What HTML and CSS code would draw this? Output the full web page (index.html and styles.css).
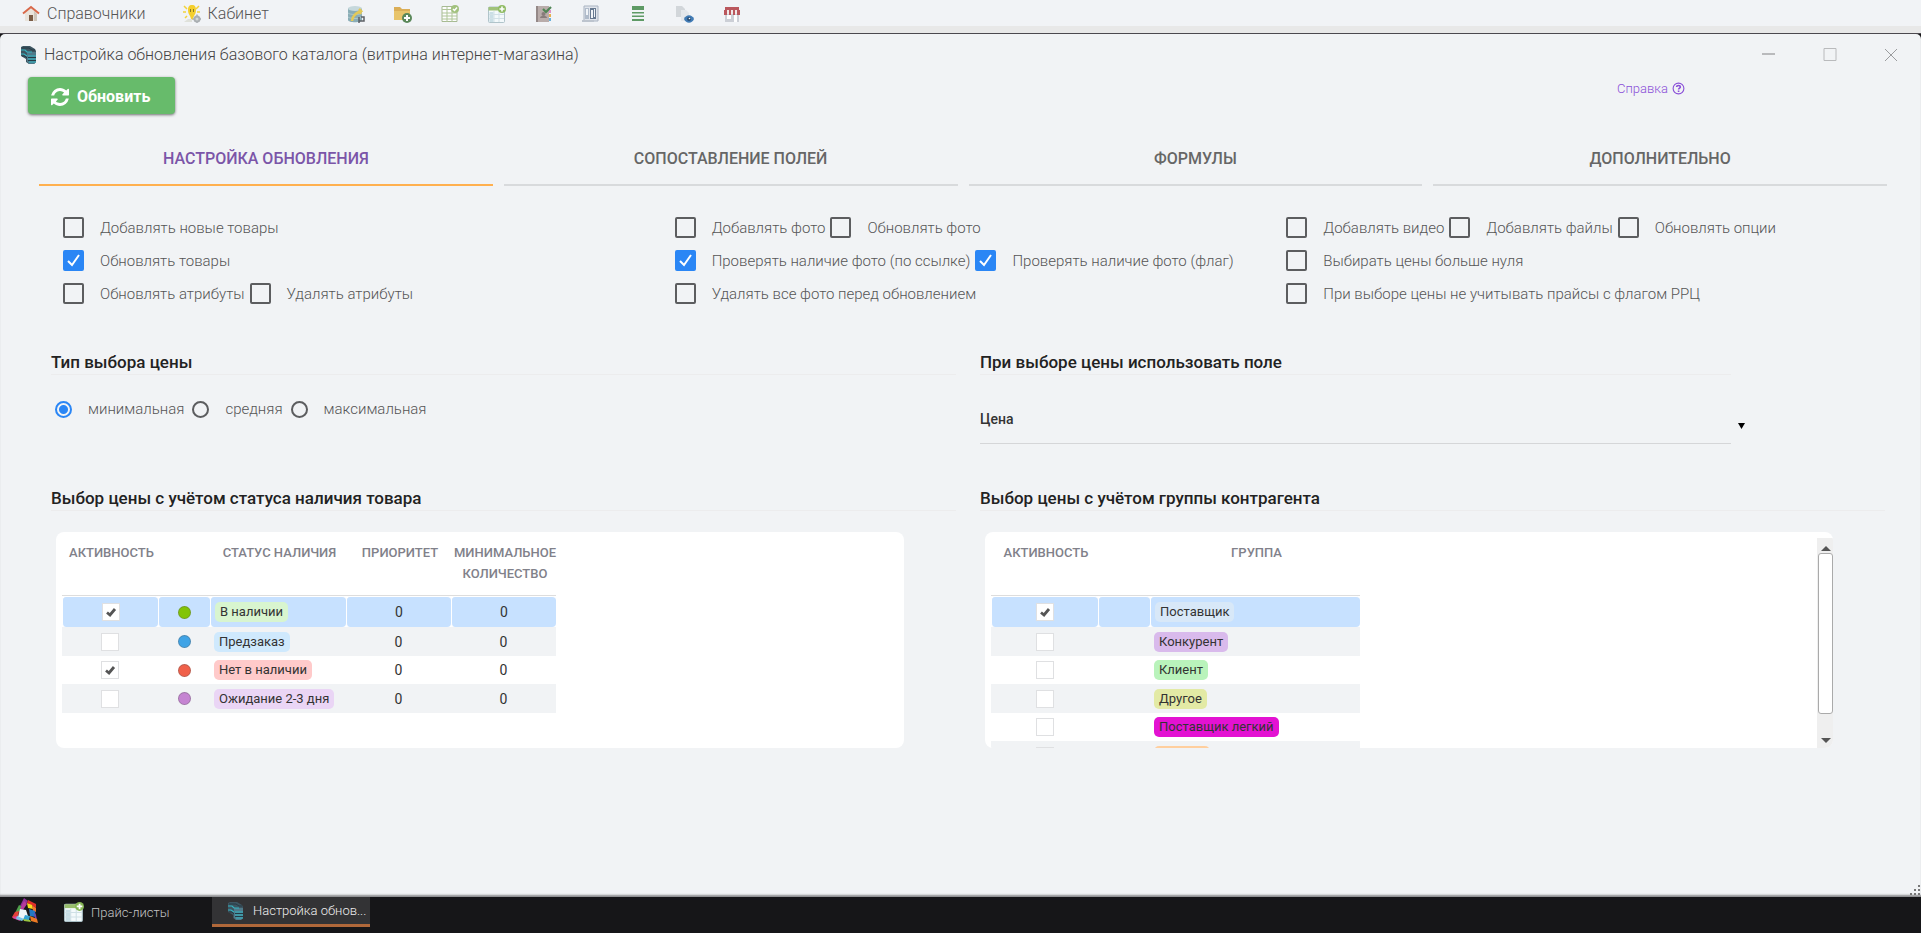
FILE: index.html
```html
<!DOCTYPE html>
<html lang="ru">
<head>
<meta charset="utf-8">
<title>Настройка обновления базового каталога</title>
<link rel="stylesheet" href="styles.css">
</head>
<body>
<svg class="sprite" aria-hidden="true">
  <symbol id="i-catalog" viewBox="0 0 18 20">
    <path fill="#3d5561" d="M1 2l2-1h7l5 3 1 2v11l-2 2H9l-3-2v-3l-5-3z"/>
    <path fill="#4f7a8a" d="M7 7h9v10l-2 2H9l-2-2z"/>
    <path stroke="#35b4c2" stroke-width="1.200" fill="none" d="M1 5h4l2 2h5M1 9h3l3 2M8 11h8M8 14h8M9 17h7"/>
    <path stroke="#263a44" stroke-width="1" fill="none" d="M2 3h7l3 2h3M2 11h3l2 2M8 12.500h8M8 15.500h8"/>
  </symbol>
  <symbol id="i-sheet-plus" viewBox="0 0 18 18">
    <rect x=".5" y="2" width="16" height="15.500" rx="1" fill="#f4fafc" stroke="#a9bfc6"/>
    <path fill="#98bd6c" d="M.5 2h16v3.500H.5z"/>
    <path fill="#c6dde5" d="M1.500 7h4v10h-4z"/>
    <path stroke="#cfe0e6" fill="none" d="M1 9.500h15M1 13.500h15M6 6v11M11 6v11"/>
    <circle cx="14" cy="4" r="4" fill="#86b655"/>
    <path stroke="#fff" stroke-width="1.600" d="M14 1.500v5M11.500 4h5"/>
  </symbol>
</svg>

<header class="topbar">
  <nav class="menu">
    <a class="menu-item" href="#">
      <svg class="icon" viewBox="0 0 18 18"><path fill="#e9e4dc" d="M3 8l6-5 6 5v8H3z"/><path fill="#cfc7bb" d="M12 6l3 3v7h-3z"/><path fill="#7a5c45" d="M7 10h4v6H7z"/><path fill="none" stroke="#d9694a" stroke-width="2" d="M1 8.500L9 2l8 6.500"/></svg>
      Справочники</a>
    <a class="menu-item" href="#">
      <svg class="icon" viewBox="0 0 18 18"><path stroke="#f2d33c" stroke-width="1.500" d="M1 1l3 3M16 1l-3 3M0 7h3M17 7h-3M2 13l2-2"/><path fill="#f4cf2d" d="M9 0c3 0 4 2 4 5s-1 4-2 6-1 4-2 4-1-2-2-4-2-3-2-6 1-5 4-5z"/><path stroke="#8b7a24" d="M7.500 4v3M10.500 4v3"/><path fill="#dfe1da" d="M1 17l4-3h4v3z"/><circle cx="14" cy="14" r="2.500" fill="#d5d8da" stroke="#aaafb2" stroke-width="2"/><path stroke="#aaafb2" stroke-width="1.500" d="M14 9.500v2M14 17v1M9.500 14h2M17 14h1"/></svg>
      Кабинет</a>
  </nav>
  <div class="tools">
    <button class="tool" type="button" aria-label="База данных"><svg class="icon" viewBox="0 0 18 18"><path fill="#7fa6b0" d="M1 3v12c0 3 14 3 14 0V3z"/><ellipse cx="8" cy="3.500" rx="7" ry="2.500" fill="#c2d6da"/><path stroke="#a8c4ca" fill="none" d="M1 8c2 2 12 2 14 0M1 12c2 2 12 2 14 0"/><path stroke="#e2c548" stroke-width="2.500" fill="none" d="M5 16c0-5 4-8 9-10l-2-2M14 6l-1 3"/><path stroke="#4d5257" stroke-width="1.500" fill="none" d="M12 12v6M12 16h5v-4h-3"/></svg></button>
    <button class="tool" type="button" aria-label="Добавить папку"><svg class="icon" viewBox="0 0 18 18"><path fill="#d9a746" d="M0 2h6l2 2h8v11H0z"/><path fill="#e8bf5c" d="M0 6h16v9H0z"/><circle cx="13" cy="13" r="5" fill="#4b7d4a"/><path stroke="#fff" stroke-width="2" d="M13 10v6M10 13h6"/></svg></button>
    <button class="tool" type="button" aria-label="Проверить лист"><svg class="icon" viewBox="0 0 18 18"><path fill="#fff" stroke="#9fb489" d="M1 1.500h15v15H1z"/><path stroke="#a9c18e" fill="none" d="M1 4.500h15M1 8h15M1 11h15M1 14h15M6 2v15M11 2v15"/><circle cx="14" cy="4" r="4" fill="#9abd72"/><path stroke="#fff" stroke-width="1.500" fill="none" d="M12 4l1.500 1.500L16 2.500"/></svg></button>
    <button class="tool" type="button" aria-label="Добавить лист"><svg class="icon"><use href="#i-sheet-plus"/></svg></button>
    <button class="tool" type="button" aria-label="Справочник"><svg class="icon" viewBox="0 0 18 18"><path fill="#b3a5a2" d="M1 1h13v16H1z"/><path fill="#8b7d7b" d="M1 1h2v16H1z"/><circle cx="8.500" cy="9" r="2" fill="#7d706e"/><path fill="#7d706e" d="M5 13c0-3 7-3 7 0z"/><path fill="#d987c0" d="M14 5h2v3h-2z"/><path fill="#e8a93b" d="M14 9h2v3h-2z"/><path fill="#5aa9d6" d="M14 13h2v3h-2z"/><path stroke="#3f7a45" stroke-width="2.200" fill="none" d="M8 4l3 3 5-5"/></svg></button>
    <button class="tool" type="button" aria-label="Архив"><svg class="icon" viewBox="0 0 18 18"><path fill="#dfe3ea" stroke="#a3adbd" d="M2 1h14v15H2z"/><path fill="#a9b5c6" d="M3 3h4v11H3z"/><path fill="#5a6c86" d="M8 3h6v11H8z"/><path fill="#f2f5f9" d="M4 4h2v6H4zM9 5h2v8H9zM12 4h1v8h-1z"/><path fill="#b8bfca" d="M0 15h12v2H0z"/></svg></button>
    <button class="tool" type="button" aria-label="Список"><svg class="icon" viewBox="0 0 18 18"><path fill="#4f9156" d="M3 1h12v4H3zM3 7h12v1.500H3zM3 10.500h12V12H3zM3 14h12v2H3z"/></svg></button>
    <button class="tool" type="button" aria-label="Просмотр"><svg class="icon" viewBox="0 0 18 18"><path fill="#cfd3d8" d="M0 1h6l3 3v8H0z"/><path fill="#e3e6ea" d="M5 5h5l3 3v8H5z"/><path fill="#2f6fae" d="M8 14c2-5 8-5 10 0-2 5-8 5-10 0z"/><circle cx="13" cy="14" r="2" fill="#153d68"/><circle cx="13.500" cy="13.500" r=".8" fill="#fff"/></svg></button>
    <button class="tool" type="button" aria-label="Магазин"><svg class="icon" viewBox="0 0 18 18"><path fill="#c9ccd3" d="M2 8h14v9H2z"/><path fill="#fff" d="M4 10h4v4H4zM11 10h3v7h-3z"/><path fill="#b5474d" d="M2 2h14v3H2zM1 5h3v5H1zM6 5h2v5H6zM10 5h2v5h-2zM14 5h3v5h-3z"/><path fill="#f2e6e6" d="M4 5h2v4H4zM8 5h2v4H8zM12 5h2v4h-2z"/></svg></button>
  </div>
</header>

<main class="window">
  <div class="titlebar">
    <svg class="title-icon"><use href="#i-catalog"/></svg>
    <h1 class="title">Настройка обновления базового каталога (витрина интернет-магазина)</h1>
    <div class="window-controls">
      <button class="wc" type="button" aria-label="Свернуть"><svg viewBox="0 0 14 14"><path d="M0 6h13" stroke-width="2"/></svg></button>
      <button class="wc" type="button" aria-label="Развернуть"><svg viewBox="0 0 14 14"><path d="M1 .5h12v12H1z"/></svg></button>
      <button class="wc" type="button" aria-label="Закрыть"><svg viewBox="0 0 14 14"><path d="M1 1l12 12M13 1L1 13" stroke="#9b9c9e"/></svg></button>
    </div>
  </div>

  <div class="actions">
    <button class="update" type="button">
      <svg class="update-icon" viewBox="0 0 1536 1536"><path fill="currentColor" d="M1511 928q0 5-1 7-64 268-268 434.500T764 1536q-146 0-282.500-55T238 1324l-129 129q-19 19-45 19t-45-19-19-45V960q0-26 19-45t45-19h448q26 0 45 19t19 45-19 45l-137 137q71 66 161 102t187 36q134 0 250-65t186-179q11-17 53-117 8-23 30-23h192q13 0 22.500 9.500t9.500 22.500zm25-800v448q0 26-19 45t-45 19h-448q-26 0-45-19t-19-45 19-45l138-138Q969 256 768 256q-134 0-250 65T332 500q-11 17-53 117-8 23-30 23H50q-13 0-22.500-9.500T18 608v-7q65-268 270-434.500T768 0q146 0 284 55.500T1297 212l130-129q19-19 45-19t45 19 19 45z"/></svg>
      Обновить</button>
    <a class="help" href="#">Справка
      <svg class="help-icon" viewBox="0 0 14 14"><circle cx="7" cy="7" r="5.800" fill="none" stroke="currentColor" stroke-width="1.200"/><path fill="none" stroke="currentColor" stroke-width="1.700" d="M4.900 5.400c.2-2.300 4.100-2.100 4.100-.1 0 1.400-1.900 1.300-1.900 2.900M7.100 9.200v1.700"/></svg></a>
  </div>

  <nav class="tabs">
    <a class="tab tab-active" href="#">НАСТРОЙКА ОБНОВЛЕНИЯ</a>
    <a class="tab" href="#">СОПОСТАВЛЕНИЕ ПОЛЕЙ</a>
    <a class="tab" href="#">ФОРМУЛЫ</a>
    <a class="tab" href="#">ДОПОЛНИТЕЛЬНО</a>
  </nav>

  <div class="options">
    <div class="option-col">
      <div class="option-row"><label class="option"><input class="check" type="checkbox">Добавлять новые товары</label></div>
      <div class="option-row"><label class="option"><input class="check" type="checkbox" checked>Обновлять товары</label></div>
      <div class="option-row"><label class="option"><input class="check" type="checkbox">Обновлять атрибуты</label><label class="option"><input class="check" type="checkbox">Удалять атрибуты</label></div>
    </div>
    <div class="option-col">
      <div class="option-row"><label class="option"><input class="check" type="checkbox">Добавлять фото</label><label class="option"><input class="check" type="checkbox">Обновлять фото</label></div>
      <div class="option-row"><label class="option"><input class="check" type="checkbox" checked>Проверять наличие фото (по ссылке)</label><label class="option"><input class="check" type="checkbox" checked>Проверять наличие фото (флаг)</label></div>
      <div class="option-row"><label class="option"><input class="check" type="checkbox">Удалять все фото перед обновлением</label></div>
    </div>
    <div class="option-col">
      <div class="option-row"><label class="option"><input class="check" type="checkbox">Добавлять видео</label><label class="option"><input class="check" type="checkbox">Добавлять файлы</label><label class="option"><input class="check" type="checkbox">Обновлять опции</label></div>
      <div class="option-row"><label class="option"><input class="check" type="checkbox">Выбирать цены больше нуля</label></div>
      <div class="option-row"><label class="option"><input class="check" type="checkbox">При выборе цены не учитывать прайсы с флагом РРЦ</label></div>
    </div>
  </div>

  <div class="sections">
    <section class="section">
      <h2 class="heading">Тип выбора цены</h2>
      <div class="radios">
        <label class="option"><input class="radio" type="radio" name="price" checked>минимальная</label>
        <label class="option"><input class="radio" type="radio" name="price">средняя</label>
        <label class="option"><input class="radio" type="radio" name="price">максимальная</label>
      </div>
    </section>
    <section class="section section-field">
      <h2 class="heading" id="field-title">При выборе цены использовать поле</h2>
      <div class="select-wrap">
        <select class="select" aria-labelledby="field-title"><option>Цена</option></select>
        <svg class="select-arrow" viewBox="0 0 8 6"><path d="M0 0h7L3.500 6z"/></svg>
      </div>
    </section>

    <section class="section">
      <h2 class="heading">Выбор цены с учётом статуса наличия товара</h2>
      <div class="card">
        <table class="grid grid-status">
          <colgroup><col class="c-active"><col class="c-dot"><col class="c-name"><col class="c-num"><col class="c-num"></colgroup>
          <thead><tr><th>АКТИВНОСТЬ</th><th></th><th>СТАТУС НАЛИЧИЯ</th><th>ПРИОРИТЕТ</th><th>МИНИМАЛЬНОЕ КОЛИЧЕСТВО</th></tr></thead>
          <tbody>
            <tr class="selected"><td><input class="tick" type="checkbox" checked aria-label="В наличии"></td><td><span class="dot dot-green"></span></td><td class="name"><span class="tag tag-green">В наличии</span></td><td>0</td><td>0</td></tr>
            <tr><td><input class="tick" type="checkbox" aria-label="Предзаказ"></td><td><span class="dot dot-blue"></span></td><td class="name"><span class="tag tag-sky">Предзаказ</span></td><td>0</td><td>0</td></tr>
            <tr><td><input class="tick" type="checkbox" checked aria-label="Нет в наличии"></td><td><span class="dot dot-red"></span></td><td class="name"><span class="tag tag-red">Нет в наличии</span></td><td>0</td><td>0</td></tr>
            <tr><td><input class="tick" type="checkbox" aria-label="Ожидание 2-3 дня"></td><td><span class="dot dot-violet"></span></td><td class="name"><span class="tag tag-violet">Ожидание 2-3 дня</span></td><td>0</td><td>0</td></tr>
          </tbody>
        </table>
      </div>
    </section>
    <section class="section">
      <h2 class="heading">Выбор цены с учётом группы контрагента</h2>
      <div class="card card-scroll">
        <table class="grid grid-group">
          <colgroup><col class="c-wide"><col class="c-dot"><col class="c-group"></colgroup>
          <thead><tr><th>АКТИВНОСТЬ</th><th></th><th>ГРУППА</th></tr></thead>
          <tbody>
            <tr class="selected"><td><input class="tick" type="checkbox" checked aria-label="Поставщик"></td><td></td><td class="name"><span class="tag tag-pale">Поставщик</span></td></tr>
            <tr><td><input class="tick" type="checkbox" aria-label="Конкурент"></td><td></td><td class="name"><span class="tag tag-lilac">Конкурент</span></td></tr>
            <tr><td><input class="tick" type="checkbox" aria-label="Клиент"></td><td></td><td class="name"><span class="tag tag-mint">Клиент</span></td></tr>
            <tr><td><input class="tick" type="checkbox" aria-label="Другое"></td><td></td><td class="name"><span class="tag tag-olive">Другое</span></td></tr>
            <tr><td><input class="tick" type="checkbox" aria-label="Поставщик легкий"></td><td></td><td class="name"><span class="tag tag-magenta">Поставщик легкий</span></td></tr>
            <tr><td><input class="tick" type="checkbox" aria-label="Прочий"></td><td></td><td class="name"><span class="tag tag-orange">Прочий</span></td></tr>
          </tbody>
        </table>
        <div class="scrollbar" aria-hidden="true">
          <svg class="scroll-arrow" viewBox="0 0 10 6"><path d="M5 0l5 5H0z"/></svg>
          <div class="scroll-thumb"></div>
          <svg class="scroll-arrow scroll-down" viewBox="0 0 10 6"><path d="M5 5l5-5H0z"/></svg>
        </div>
      </div>
    </section>
  </div>
  <svg class="grip" viewBox="0 0 12 12"><path fill="#777" d="M9 1h2v2H9zM9 5h2v2H9zM5 5h2v2H5zM9 9h2v2H9zM5 9h2v2H5zM1 9h2v2H1z"/></svg>
</main>

<footer class="taskbar">
  <button class="start" type="button" aria-label="Пуск">
    <svg class="start-icon" viewBox="0 0 26 26"><path fill="#8e2f96" d="M12 0l4 3-4 6-5 1z"/><path fill="#4fa04a" d="M7 7l4 2-3 5-5 1z"/><path fill="#b53a9c" d="M12 3l3 3-4 6-3-1z"/><path fill="#f5dd1f" d="M15 5l5 1 1 5-5-1z"/><path fill="#e0302b" d="M16 2l8 4v4l-4-3-5-2z"/><path fill="#f0762a" d="M20 7l4 3v4l-3-1z"/><path fill="#2479c4" d="M17 11l6 2 1 6-6-1z"/><path fill="#7b3fae" d="M22 14l2 3 1 5-2-1z"/><path fill="#ee7a24" d="M18 18l7 3 1 4-7-2z"/><path fill="#e5413a" d="M3 14l4-1-1 5-4 3-2-2z"/><path fill="#d8459d" d="M0 19l6-1 2 5-5-2z"/><path fill="#eef5f8" d="M8 11l6 1 2 6-5 4-5-3z"/><path fill="#79c4e8" d="M5 18l7 3-2 2-6-2z"/><path fill="#35a4d4" d="M13 17l5 1-1 4-6 0z"/><path fill="#9bc540" d="M11 21l7 1 1 2-7-1z"/></svg>
  </button>
  <button class="task" type="button"><svg class="task-icon"><use href="#i-sheet-plus"/></svg><span class="task-text">Прайс-листы</span></button>
  <button class="task task-active" type="button"><svg class="task-icon"><use href="#i-catalog"/></svg><span class="task-text">Настройка обнов...</span></button>
</footer>
</body>
</html>
```
FILE: styles.css
```css
* { box-sizing: border-box; }
body {
  margin: 0;
  min-height: 100vh;
  display: flex;
  flex-direction: column;
  background: #161618;
  color: #444;
  font-family: Roboto, "Liberation Sans", sans-serif;
  font-size: 16px;
  font-weight: 300;
}
button { padding: 0; border: 0; background: none; font: inherit; color: inherit; }
a { color: inherit; text-decoration: none; }
svg { display: block; flex: none; }
.sprite { position: absolute; width: 0; height: 0; }

.topbar {
  height: 34px;
  display: flex;
  align-items: flex-start;
  background: #f1f3f6;
  border-bottom: 1px solid #4b484e;
  box-shadow: inset 0 -7px #e8e8e8;
}
.menu { display: flex; gap: 37px; width: 347px; padding-left: 22px; }
.menu-item { display: flex; align-items: center; gap: 7px; height: 27px; color: #555; }
.icon { width: 18px; height: 18px; }
.tools { display: flex; align-items: center; gap: 29px; height: 28px; opacity: .9; }

.window {
  position: relative;
  flex: 1;
  padding-bottom: 24px;
  background: #f1f3f5;
  border-radius: 5px 5px 0 0;
  box-shadow: inset 0 -3px 2px -1px #8c8d8f;
}
.titlebar { display: flex; align-items: center; gap: 6px; height: 40px; padding: 1px 23px 0 20px; }
.title-icon { width: 18px; height: 20px; }
.title { flex: 1; margin: 0; font-size: 16px; font-weight: 300; line-height: 24px; }
.window-controls { display: flex; gap: 47px; }
.wc svg { width: 14px; height: 14px; fill: none; stroke: #b9babc; stroke-width: 1; }

.actions { display: flex; justify-content: space-between; align-items: flex-start; padding: 3px 236px 0 28px; }
.update {
  display: flex;
  align-items: center;
  gap: 8px;
  height: 37px;
  padding: 3px 25px 1px 23px;
  border-radius: 4px;
  background: #67bb6b;
  box-shadow: 0 1px 3px rgba(0, 0, 0, .55);
  color: #fff;
  font-weight: 700;
}
.update-icon { width: 18px; height: 18px; }
.help { display: flex; align-items: center; gap: 4px; margin-top: 3px; font-size: 13px; line-height: 17px; color: #8a4fd8; }
.help-icon { width: 13px; height: 13px; }

.tabs { display: grid; grid-template-columns: repeat(4, 1fr); gap: 11px; margin: 31px 34px 0 39px; }
.tab {
  height: 41px;
  border-bottom: 2px solid #d8dadc;
  font-size: 16px;
  font-weight: 500;
  line-height: 28px;
  text-align: center;
  color: #666;
}
.tab-active { border-color: #ffb04f; color: #7b55a8; }

.options { display: grid; grid-template-columns: repeat(3, 1fr); padding: 25px 23px 0 63px; }
.option-row { display: flex; align-items: center; gap: 5px; height: 33px; white-space: nowrap; }
.option { display: flex; align-items: center; gap: 16px; font-size: 15px; color: #555; }
.check {
  appearance: none;
  width: 21px;
  height: 21px;
  margin: 0;
  border: 2px solid #5c5d5f;
  border-radius: 2px;
}
.check:checked {
  border-color: #2a86f5;
  background: #2a86f5 url("data:image/svg+xml,%3Csvg xmlns='http://www.w3.org/2000/svg' viewBox='0 0 17 17'%3E%3Cpath d='M3 9l4 4 7-10' fill='none' stroke='white' stroke-width='2'/%3E%3C/svg%3E") center / 17px 17px no-repeat;
}

.sections { display: grid; grid-template-columns: 1fr 1fr; column-gap: 24px; padding: 40px 36px 0 51px; }
.section { height: 136px; }
.section:nth-child(n+3) { height: 250px; }
.section-field { padding-right: 154px; }
.heading {
  margin: 0;
  height: 25px;
  border-bottom: 1px solid #ececed;
  font-size: 17px;
  font-weight: 500;
  line-height: 24px;
  color: #222;
}
.radios { display: flex; gap: 8px; padding: 25px 0 0 4px; }
.radio {
  appearance: none;
  width: 17px;
  height: 17px;
  margin: 0;
  border: 2px solid #5c5d5f;
  border-radius: 50%;
}
.radio:checked { border-color: #2a86f5; background: radial-gradient(circle, #2a86f5 4px, transparent 5px); }
.select-wrap { position: relative; margin-top: 20px; }
.select {
  appearance: none;
  display: block;
  width: 100%;
  height: 49px;
  padding: 0;
  border: 0;
  border-bottom: 1px solid #d5d6d8;
  border-radius: 0;
  background: none;
  font: 500 14px/49px Roboto, sans-serif;
  color: #333;
}
.select-arrow { position: absolute; left: calc(100% + 7px); top: 28px; width: 8px; height: 6px; }

.card {
  position: relative;
  height: 216px;
  margin: 21px 52px 0 5px;
  padding: 6px 6px 0;
  border-radius: 8px;
  background: #fff;
  overflow: hidden;
}
.grid { table-layout: fixed; border-collapse: separate; border-spacing: 0; font-size: 14px; font-weight: 400; color: #333; }
.grid-status { width: 494px; }
.grid-group { width: 369px; }
.c-active { width: 96px; }
.c-dot { width: 52px; }
.c-name { width: 136px; }
.c-num { width: 105px; }
.c-wide { width: 107px; }
.c-group { width: 210px; }
.grid th {
  height: 58px;
  padding: 4px 0 0 3px;
  border-bottom: 1px solid #ddd;
  vertical-align: top;
  font-size: 13px;
  font-weight: 500;
  line-height: 21px;
  color: #81818a;
}
.grid td { height: 28px; padding: 0; text-align: center; }
.grid .name { padding-left: 4px; text-align: left; }
.grid tbody tr:nth-child(even) td { height: 29px; background: #f1f3f5; }
.grid .selected td { height: 31px; background: #c7e1ff; border: 1px solid #fff; border-bottom-width: 0; border-right-width: 0; border-radius: 4px; }
.tick {
  appearance: none;
  display: block;
  width: 18px;
  height: 18px;
  margin: 0 auto;
  border: 1px solid #dfe0e2;
  background: #fff;
}
.tick:checked { background: #fff url("data:image/svg+xml,%3Csvg xmlns='http://www.w3.org/2000/svg' viewBox='0 0 16 16'%3E%3Cpath d='M4 8.500l3 2.500 5-6' fill='none' stroke='%23555' stroke-width='2.800'/%3E%3C/svg%3E") center / 16px 16px no-repeat; }
.dot { display: block; width: 13px; height: 13px; margin: 0 auto; border-radius: 50%; border: 1px solid rgba(90, 90, 90, .35); }
.dot-green { background: #82c406; }
.dot-blue { background: #3fa3e6; }
.dot-red { background: #f0604a; }
.dot-violet { background: #c584d2; }
.tag { display: inline-block; padding: 0 5px; border-radius: 5px; font-size: 13px; line-height: 20px; vertical-align: middle; }
.tag-green { background: #d8f5cf; }
.tag-sky { background: #cfe9fd; }
.tag-red { background: #ffcaca; }
.tag-violet { background: #ead5f5; }
.tag-pale { background: #d8e8f8; }
.tag-lilac { background: #d9baec; }
.tag-mint { background: #b9f3bb; }
.tag-olive { background: #e3eaa5; }
.tag-magenta { background: #e312d2; }
.tag-orange { background: #ffcf9e; }

.scrollbar {
  position: absolute;
  top: 6px;
  right: 0;
  bottom: 0;
  width: 16px;
  display: flex;
  flex-direction: column;
  align-items: center;
  padding: 8px 0 4px 1px;
  background: #efefef;
}
.scroll-arrow { width: 10px; height: 6px; fill: #555; }
.scroll-thumb { width: 15px; height: 161px; margin-top: 1px; border: 1px solid #aaa; border-radius: 3px; background: #fff; }
.scroll-down { margin-top: auto; }
.grip { position: absolute; right: 0; bottom: 1px; width: 12px; height: 12px; }

.taskbar { display: flex; align-items: flex-start; height: 36px; padding-left: 12px; background: #161618; color: #c4c4c4; font-size: 13px; }
.start { width: 52px; padding-top: 1px; }
.start-icon { width: 26px; height: 26px; }
.task { display: flex; align-items: center; gap: 7px; width: 148px; height: 30px; }
.task-active { width: 158px; padding-left: 14px; background: #333335; border-bottom: 3px solid #b0683a; color: #eee; }
.task-icon { width: 20px; height: 20px; }
.task-text { white-space: nowrap; }
```
